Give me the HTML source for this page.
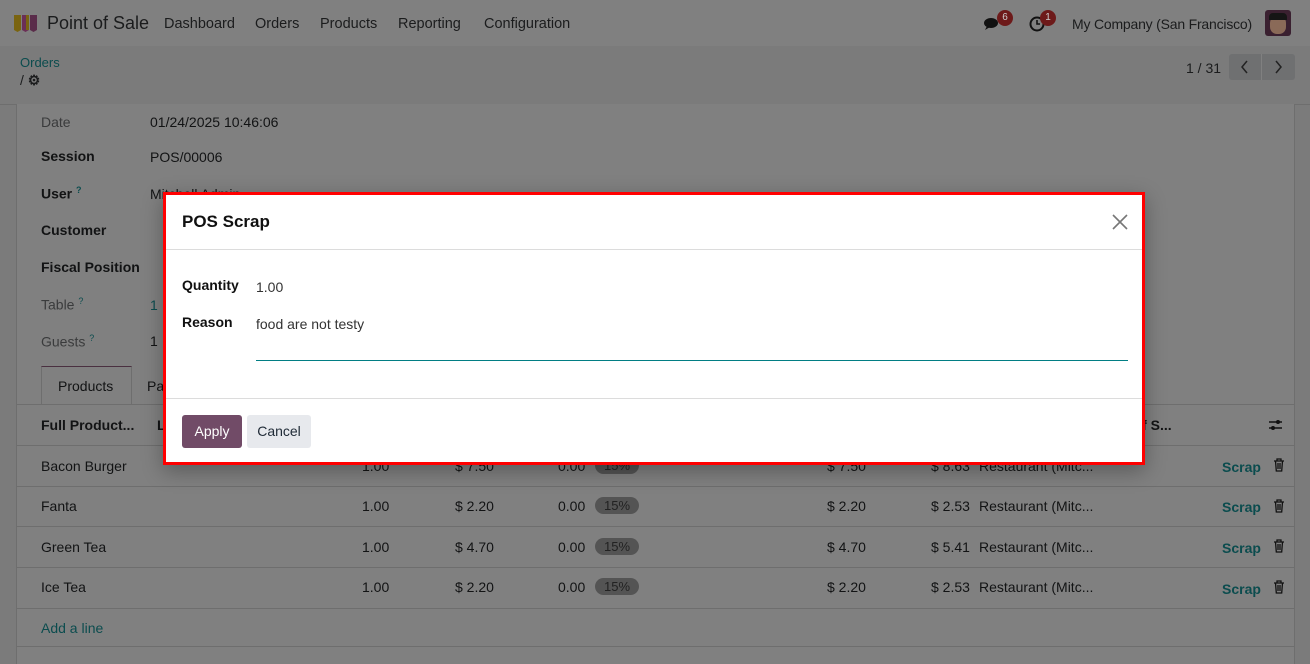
<!DOCTYPE html>
<html><head><meta charset="utf-8"><style>
*{box-sizing:border-box;margin:0;padding:0}
body{width:1310px;height:656px;overflow:hidden;background:#7b7b7b;font-family:"Liberation Sans",sans-serif;font-size:14px;color:#121314;position:relative}
.a{position:absolute;white-space:nowrap}
.nav{left:0;top:0;width:1310px;height:46px;background:#808080}
.sheet{left:16px;top:104px;width:1279px;height:560px;background:#808080;border-left:1px solid #6e6e6e;border-right:1px solid #6e6e6e}
.hl{position:absolute;height:1px;background:#6e6e6e}
.lbl{color:#3a3b3c}
.b{font-weight:bold}
.teal{color:#0b4c4e}
.badge{background:#545454;border-radius:10px;padding:1px 9px;font-size:13px;color:#222}
.modal{left:163px;top:192px;width:982px;height:273px;background:#fff;border:3px solid #f00;box-shadow:0 6px 20px rgba(0,0,0,.3)}
</style></head><body>
<div class="a nav"></div>
<svg class="a" style="left:13px;top:13px" width="26" height="20" viewBox="0 0 26 20"><path d="M1 2h7v15l-3.5 2L1 17z" fill="#7a6410"/><path d="M9 2h7v15l-3.5 2L9 17z" fill="#6b2f56"/><path d="M17 2h7v15l-3.5 2L17 17z" fill="#5a2c4a"/><path d="M5 2h3v15H5zM13 2h3v15h-3z" fill="#7a6410"/></svg>
<div class="a" style="left:47px;top:13px;font-size:18px;color:#1b1c1d">Point of Sale</div>
<div class="a" style="left:164px;top:16px;font-size:14.5px;color:#1b1c1d">Dashboard</div>
<div class="a" style="left:255px;top:16px;font-size:14.5px;color:#1b1c1d">Orders</div>
<div class="a" style="left:320px;top:16px;font-size:14.5px;color:#1b1c1d">Products</div>
<div class="a" style="left:398px;top:16px;font-size:14.5px;color:#1b1c1d">Reporting</div>
<div class="a" style="left:484px;top:16px;font-size:14.5px;color:#1b1c1d">Configuration</div>
<svg class="a" style="left:983px;top:16px" width="20" height="16"><ellipse cx="8" cy="7" rx="7" ry="5" fill="#111"/><path d="M4 10l-2 4 5-3z" fill="#111"/></svg>
<div class="a" style="left:997px;top:10px;width:16px;height:16px;border-radius:8px;background:#6d1a1a;color:#ccc;font-size:10px;text-align:center;line-height:16px">6</div>
<svg class="a" style="left:1028px;top:15px" width="18" height="18"><circle cx="9" cy="9" r="6.5" fill="none" stroke="#111" stroke-width="2"/><path d="M9 5v4h3" stroke="#111" stroke-width="1.6" fill="none"/></svg>
<div class="a" style="left:1040px;top:10px;width:16px;height:16px;border-radius:8px;background:#6d1a1a;color:#ccc;font-size:10px;text-align:center;line-height:16px">1</div>
<div class="a" style="left:1072px;top:16px;font-size:14px;color:#1b1c1d;letter-spacing:-0.2px">My Company (San Francisco)</div>
<div class="a" style="left:1265px;top:10px;width:26px;height:26px;border-radius:3px;background:#3a2030;overflow:hidden"><div style="position:absolute;left:5px;top:6px;width:16px;height:18px;border-radius:7px;background:#8a6a58"></div><div style="position:absolute;left:4px;top:3px;width:18px;height:7px;background:#151515;border-radius:4px 4px 0 0"></div></div>
<div class="a teal" style="left:20px;top:55px;font-size:13px">Orders</div>
<div class="a" style="left:20px;top:72px;font-size:14px;color:#1b1c1d">/ <b>⚙</b></div>
<div class="a" style="left:1186px;top:60px;color:#1b1c1d">1 / 31</div>
<div class="a" style="left:1229px;top:54px;width:66px;height:26px;background:#6f7071;border-radius:3px"></div>
<div class="a" style="left:1261px;top:54px;width:1px;height:26px;background:#808080"></div>
<svg class="a" style="left:1240px;top:60px" width="10" height="14"><path d="M7 1L2 7l5 6" stroke="#222" stroke-width="1.5" fill="none"/></svg>
<svg class="a" style="left:1273px;top:60px" width="10" height="14"><path d="M3 1l5 6-5 6" stroke="#222" stroke-width="1.5" fill="none"/></svg>
<div class="hl" style="left:0;top:104px;width:1310px"></div>
<div class="a sheet"></div>
<div class="a lbl" style="left:41px;top:114px">Date</div><div class="a" style="left:150px;top:114px">01/24/2025 10:46:06</div>
<div class="a b" style="left:41px;top:148px">Session</div><div class="a" style="left:150px;top:149px">POS/00006</div>
<div class="a b" style="left:41px;top:185px">User <sup class="teal" style="font-size:9px">?</sup></div><div class="a" style="left:150px;top:186px">Mitchell Admin</div>
<div class="a b" style="left:41px;top:222px">Customer</div>
<div class="a b" style="left:41px;top:259px">Fiscal Position</div>
<div class="a lbl" style="left:41px;top:296px">Table <sup class="teal" style="font-size:9px">?</sup></div><div class="a teal" style="left:150px;top:297px">1</div>
<div class="a lbl" style="left:41px;top:333px">Guests <sup class="teal" style="font-size:9px">?</sup></div><div class="a" style="left:150px;top:333px">1</div>
<div class="a" style="left:41px;top:366px;width:91px;height:39px;border:1px solid #6e6e6e;border-top-color:#4a3040;border-bottom:none;background:#808080"></div>
<div class="a" style="left:58px;top:378px">Products</div>
<div class="a" style="left:132px;top:366px;width:40px;height:39px;border-right:1px solid #6e6e6e"></div>
<div class="a" style="left:147px;top:378px">Pa</div>
<div class="hl" style="left:16px;top:404px;width:1279px"></div>
<div class="a b" style="left:41px;top:417px">Full Product...</div><div class="a b" style="left:157px;top:417px">L</div>
<div class="a b" style="left:1125px;top:417px">t of S...</div>
<svg class="a" style="left:1268px;top:418px" width="15" height="14"><path d="M1 4h13M1 10h13" stroke="#111" stroke-width="1.5"/><circle cx="10" cy="4" r="2" fill="#111"/><circle cx="5" cy="10" r="2" fill="#111"/></svg>
<div class="hl" style="left:16px;top:445px;width:1279px"></div>
<div class="hl" style="left:16px;top:486px;width:1279px"></div>
<div class="hl" style="left:16px;top:526px;width:1279px"></div>
<div class="hl" style="left:16px;top:567px;width:1279px"></div>
<div class="hl" style="left:16px;top:608px;width:1279px"></div>
<div class="hl" style="left:16px;top:646px;width:1279px"></div>
<div class="a" style="left:41px;top:458px">Bacon Burger</div><div class="a" style="left:362px;top:458px">1.00</div><div class="a" style="left:455px;top:458px">$ 7.50</div><div class="a" style="left:558px;top:458px">0.00</div><div class="a badge" style="left:595px;top:457px">15%</div><div class="a" style="left:827px;top:458px">$ 7.50</div><div class="a" style="left:931px;top:458px">$ 8.63</div><div class="a" style="left:979px;top:458px">Restaurant (Mitc...</div>
<div class="a" style="left:41px;top:498px">Fanta</div><div class="a" style="left:362px;top:498px">1.00</div><div class="a" style="left:455px;top:498px">$ 2.20</div><div class="a" style="left:558px;top:498px">0.00</div><div class="a badge" style="left:595px;top:497px">15%</div><div class="a" style="left:827px;top:498px">$ 2.20</div><div class="a" style="left:931px;top:498px">$ 2.53</div><div class="a" style="left:979px;top:498px">Restaurant (Mitc...</div>
<div class="a" style="left:41px;top:539px">Green Tea</div><div class="a" style="left:362px;top:539px">1.00</div><div class="a" style="left:455px;top:539px">$ 4.70</div><div class="a" style="left:558px;top:539px">0.00</div><div class="a badge" style="left:595px;top:538px">15%</div><div class="a" style="left:827px;top:539px">$ 4.70</div><div class="a" style="left:931px;top:539px">$ 5.41</div><div class="a" style="left:979px;top:539px">Restaurant (Mitc...</div>
<div class="a" style="left:41px;top:579px">Ice Tea</div><div class="a" style="left:362px;top:579px">1.00</div><div class="a" style="left:455px;top:579px">$ 2.20</div><div class="a" style="left:558px;top:579px">0.00</div><div class="a badge" style="left:595px;top:578px">15%</div><div class="a" style="left:827px;top:579px">$ 2.20</div><div class="a" style="left:931px;top:579px">$ 2.53</div><div class="a" style="left:979px;top:579px">Restaurant (Mitc...</div>
<div class="a teal b" style="left:1222px;top:459px">Scrap</div>
<div class="a teal b" style="left:1222px;top:499px">Scrap</div>
<div class="a teal b" style="left:1222px;top:540px">Scrap</div>
<div class="a teal b" style="left:1222px;top:581px">Scrap</div>
<svg class="a" style="left:1273px;top:458px" width="12" height="14"><path d="M1 3h10M4 3V1h4v2M2.5 3l.8 10h5.4l.8-10M5 5v6M7 5v6" stroke="#111" stroke-width="1.3" fill="none"/></svg>
<svg class="a" style="left:1273px;top:499px" width="12" height="14"><path d="M1 3h10M4 3V1h4v2M2.5 3l.8 10h5.4l.8-10M5 5v6M7 5v6" stroke="#111" stroke-width="1.3" fill="none"/></svg>
<svg class="a" style="left:1273px;top:539px" width="12" height="14"><path d="M1 3h10M4 3V1h4v2M2.5 3l.8 10h5.4l.8-10M5 5v6M7 5v6" stroke="#111" stroke-width="1.3" fill="none"/></svg>
<svg class="a" style="left:1273px;top:580px" width="12" height="14"><path d="M1 3h10M4 3V1h4v2M2.5 3l.8 10h5.4l.8-10M5 5v6M7 5v6" stroke="#111" stroke-width="1.3" fill="none"/></svg>
<div class="a teal" style="left:41px;top:620px">Add a line</div>

<div class="a modal">
 <div class="a" style="left:16px;top:17px;font-size:17px;font-weight:bold;color:#111">POS Scrap</div>
 <svg class="a" style="left:946px;top:19px" width="16" height="16"><path d="M1 1l14 14M15 1L1 15" stroke="#777" stroke-width="1.6"/></svg>
 <div class="hl" style="left:0;top:54px;width:976px;background:#dcdcdc"></div>
 <div class="a b" style="left:16px;top:82px;color:#111">Quantity</div><div class="a" style="left:90px;top:84px;color:#333">1.00</div>
 <div class="a b" style="left:16px;top:119px;color:#111">Reason</div><div class="a" style="left:90px;top:121px;color:#333">food are not testy</div>
 <div class="hl" style="left:90px;top:165px;width:872px;background:#017e84"></div>
 <div class="hl" style="left:0;top:203px;width:976px;background:#dcdcdc"></div>
 <div class="a" style="left:16px;top:220px;width:60px;height:33px;background:#714b67;border-radius:3px;color:#fff;text-align:center;line-height:33px;font-size:14px">Apply</div>
 <div class="a" style="left:81px;top:220px;width:64px;height:33px;background:#e7e9ed;border-radius:3px;color:#1f2a36;text-align:center;line-height:33px;font-size:14px">Cancel</div>
</div>
</body></html>
